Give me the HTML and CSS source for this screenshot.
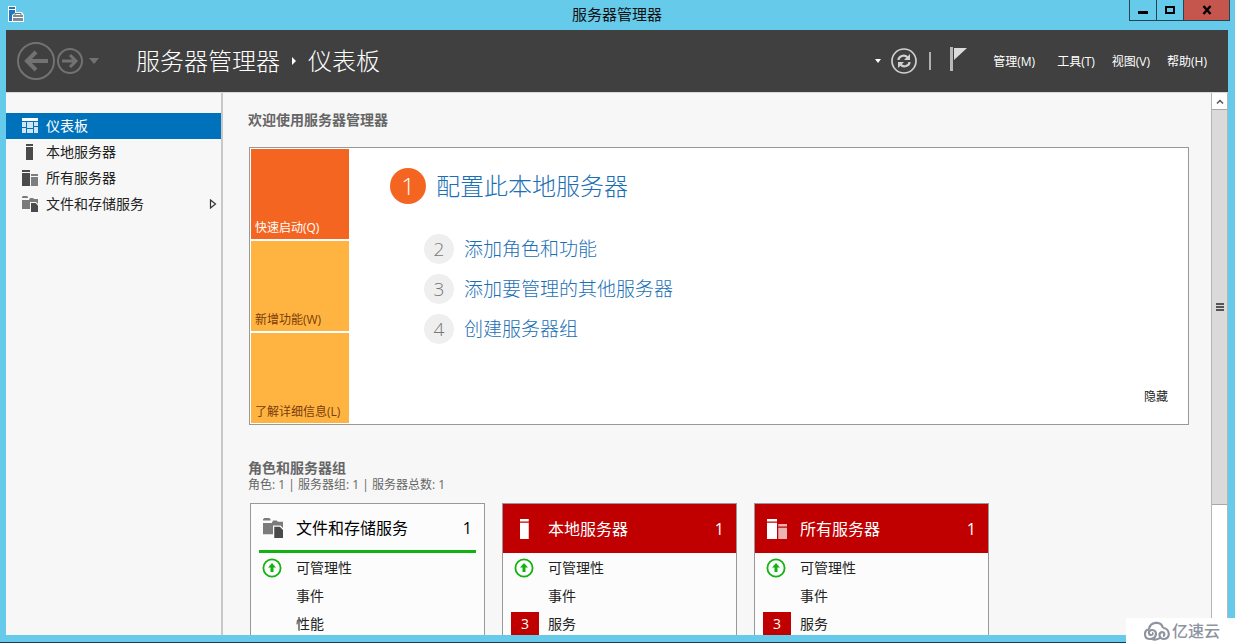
FILE: index.html
```html
<!DOCTYPE html>
<html lang="zh-CN">
<head>
<meta charset="utf-8">
<title>服务器管理器</title>
<link rel="stylesheet" href="styles.css">
</head>
<body>
<svg class="sprite" width="0" height="0" aria-hidden="true">
  <symbol id="i-server" viewBox="0 0 16 16"><path d="M4 0h7v2H4zM4 3h7v13H4z"/></symbol>
  <symbol id="i-servers" viewBox="0 0 16 16"><path d="M0 0h8v2H0zM0 3h8v13H0z"/><path opacity=".7" d="M9 4h7v2H9zM9 7h7v9H9z"/></symbol>
  <symbol id="i-files" viewBox="0 0 16 16"><path opacity=".72" d="M0 1l1-1h4l1 1v1H0zM0 4h7l1-2h3l1 1h4v5l-2-2H8v7H0z"/><path d="M9 7h4.500L16 9.500V16H9z"/></symbol>
  <symbol id="i-up" viewBox="0 0 20 20"><circle cx="10" cy="10" r="8.6" fill="none" stroke="#12b212" stroke-width="1.8"/><path fill="#12b212" d="M10 5l4 4.500h-2.500V14h-3V9.500H6z"/></symbol>
</svg>
<div class="window">
  <header class="titlebar">
    <svg class="app-icon" viewBox="0 0 16 16" aria-hidden="true">
      <path fill="#fff" d="M0 0h8v6h6l2 3v7H0z"/><path fill="#1f78bd" d="M1 1h6v2H1zM1 4h6v3L4 9v6H1z"/>
      <path fill="#7f8b95" d="M5 9h10v2H5zM5 12h10v3H5z"/><path fill="none" stroke="#66757f" d="M7 9V7.500h6V9"/>
    </svg>
    <h1 class="window-title">服务器管理器</h1>
    <div class="window-buttons">
      <button class="win-btn" aria-label="最小化"><svg width="10" height="10"><path d="M0 6h10v3H0z"/></svg></button>
      <button class="win-btn" aria-label="最大化"><svg width="10" height="10"><path fill="none" stroke="#000" stroke-width="2" d="M1 2h8v6H1z"/></svg></button>
      <button class="win-btn close" aria-label="关闭"><svg width="10" height="10"><path fill="none" stroke="#000" stroke-width="2.4" d="M1.500 1l7 8M8.500 1l-7 8"/></svg></button>
    </div>
  </header>

  <div class="toolbar">
    <div class="history">
      <button class="icon-btn" aria-label="后退"><svg width="38" height="38" fill="none" stroke="#727272"><circle cx="19" cy="19" r="18" stroke-width="2"/><path stroke-width="4" d="M31 19H10M19 10l-9 9 9 9"/></svg></button>
      <button class="icon-btn" aria-label="前进"><svg width="26" height="26" fill="none" stroke="#727272"><circle cx="13" cy="13" r="12" stroke-width="2"/><path stroke-width="3" d="M5 13h14M13 7l6 6-6 6"/></svg></button>
      <button class="icon-btn drop" aria-label="历史记录"><svg width="10" height="6"><path fill="#727272" d="M0 0h10L5 6z"/></svg></button>
    </div>
    <div class="crumbs">
      <span>服务器管理器</span>
      <svg width="6" height="8" aria-hidden="true"><path fill="#fff" d="M1 0l4 4-4 4z"/></svg>
      <span>仪表板</span>
    </div>
    <div class="actions">
      <button class="icon-btn" aria-label="选项"><svg width="8" height="5"><path fill="#fff" d="M1 0h6L4 4z"/></svg></button>
      <button class="icon-btn" aria-label="刷新"><svg width="26" height="26" fill="none" stroke="#d0d0d0"><circle cx="13" cy="13" r="12" stroke-width="1.700"/><path stroke-width="2.200" d="M7.500 12c0-4 6-6 9-2.500M18.500 14c0 4-6 6-9 2.500"/><path fill="#d0d0d0" stroke="none" d="M19 6v6h-6zM7 20v-6h6z"/></svg></button>
      <span class="divider"></span>
      <button class="icon-btn flag" aria-label="通知"><svg width="18" height="24"><path fill="#b8b8b8" d="M1 0h3v24H1z"/><path fill="#dcdcdc" d="M5 1h13L5 13z"/></svg></button>
    </div>
    <nav class="menu">
      <button>管理(M)</button><button>工具(T)</button><button>视图(V)</button><button>帮助(H)</button>
    </nav>
  </div>

  <div class="body">
    <nav class="sidebar">
      <a class="nav-item active" href="#"><svg viewBox="0 0 16 16"><path fill="#fff" d="M0 0h16v3H0z"/><path fill="#cfe5f5" d="M0 4h4v5H0zM0 10h4v5H0zM5 4h6v6H5zM5 11h6v4H5zM12 4h4v4h-4zM12 9h4v6h-4z"/></svg><span>仪表板</span></a>
      <a class="nav-item" href="#"><svg><use href="#i-server"/></svg><span>本地服务器</span></a>
      <a class="nav-item" href="#"><svg><use href="#i-servers"/></svg><span>所有服务器</span></a>
      <a class="nav-item" href="#"><svg><use href="#i-files"/></svg><span>文件和存储服务</span><svg class="expand" viewBox="0 0 8 10"><path fill="none" stroke="#333" stroke-width="1.200" d="M1.500 1l5 4-5 4z"/></svg></a>
    </nav>

    <main class="content">
      <h2 class="section-title">欢迎使用服务器管理器</h2>
      <section class="welcome">
        <div class="tabs">
          <button class="tab current">快速启动(Q)</button>
          <button class="tab">新增功能(W)</button>
          <button class="tab">了解详细信息(L)</button>
        </div>
        <div class="steps">
          <a class="step first" href="#"><span class="num">1</span><span>配置此本地服务器</span></a>
          <a class="step" href="#"><span class="num">2</span><span>添加角色和功能</span></a>
          <a class="step" href="#"><span class="num">3</span><span>添加要管理的其他服务器</span></a>
          <a class="step" href="#"><span class="num">4</span><span>创建服务器组</span></a>
        </div>
        <button class="hide">隐藏</button>
      </section>

      <h2 class="section-title groups">角色和服务器组</h2>
      <p class="summary">角色: 1 | 服务器组: 1 | 服务器总数: 1</p>
      <div class="tiles">
        <article class="tile">
          <h3 class="tile-head ok"><svg><use href="#i-files"/></svg><span>文件和存储服务</span><span class="count">1</span></h3>
          <ul>
            <li><svg><use href="#i-up"/></svg><span>可管理性</span></li>
            <li><i></i><span>事件</span></li>
            <li><i></i><span>性能</span></li>
          </ul>
        </article>
        <article class="tile">
          <h3 class="tile-head alert"><svg><use href="#i-server"/></svg><span>本地服务器</span><span class="count">1</span></h3>
          <ul>
            <li><svg><use href="#i-up"/></svg><span>可管理性</span></li>
            <li><i></i><span>事件</span></li>
            <li><b>3</b><span>服务</span></li>
          </ul>
        </article>
        <article class="tile">
          <h3 class="tile-head alert"><svg><use href="#i-servers"/></svg><span>所有服务器</span><span class="count">1</span></h3>
          <ul>
            <li><svg><use href="#i-up"/></svg><span>可管理性</span></li>
            <li><i></i><span>事件</span></li>
            <li><b>3</b><span>服务</span></li>
          </ul>
        </article>
      </div>
    </main>

    <div class="scrollbar">
      <button class="scroll-up" aria-label="向上滚动"><svg width="8" height="5"><path fill="none" stroke="#555" stroke-width="1.500" d="M1 4.500l3-3 3 3"/></svg></button>
      <div class="thumb"><svg width="8" height="8"><path fill="#555" d="M0 0h8v2H0zM0 3h8v2H0zM0 6h8v2H0z"/></svg></div>
    </div>
  </div>
</div>
<div class="watermark">
  <svg viewBox="0 0 26 20" fill="none" stroke="#8d939f" stroke-width="2.200" aria-hidden="true"><path d="M5 8C6 1 17-1 19 7M19 7c7 0 8 11 1 11-5 0-6-6-2-7 3 0 3 4 1 4M17 16c-3 3-7 3-9 2M5 8c-6 2-5 10 1 10 7 0 8-9 2-9-4 0-4 5-1 5 2 0 2-2 1-2"/></svg>
  <span>亿速云</span>
</div>
</body>
</html>
```
FILE: styles.css
```css
* { box-sizing: border-box; }

body {
  margin: 0;
  font: 14px/20px "Open Sans", "Noto Sans CJK SC", sans-serif;
  color: #222;
}

button { font: inherit; color: inherit; background: none; border: 0; padding: 0; }
a { color: inherit; text-decoration: none; }
h1, h2, h3, p, ul { margin: 0; padding: 0; list-style: none; }
svg { display: block; flex: none; }
.sprite { position: absolute; }

.window {
  height: 100vh;
  display: flex;
  flex-direction: column;
  padding: 0 7px 7px 6px;
  background: #66cbea;
  border-bottom: 1px solid #1d3a4c;
}

/* Title bar */
.titlebar {
  flex: none;
  height: 30px;
  display: grid;
  grid-template-columns: 1fr auto 1fr;
  align-items: start;
}
.app-icon { width: 16px; height: 16px; margin: 6px 0 0 2px; }
.window-title { font-size: 15px; font-weight: 400; line-height: 28px; color: #111; }
.window-buttons { justify-self: end; display: flex; margin-right: -2px; border: 1px solid #27454f; border-top: 0; }
.win-btn { width: 27px; height: 20px; display: grid; place-items: center; border-right: 1px solid #27454f; }
.win-btn.close { width: 45px; background: #c5564e; border-right: 0; }

/* Toolbar */
.toolbar {
  flex: none;
  height: 62px;
  display: flex;
  align-items: center;
  padding: 0 21px 0 11px;
  background: #404040;
  color: #fff;
}
.history { display: flex; align-items: center; gap: 2px; }
.drop { margin-left: 4px; }
.crumbs {
  display: flex;
  align-items: center;
  gap: 11px;
  margin-left: 37px;
  font-size: 24px;
  font-weight: 300;
  line-height: 36px;
}
.actions { display: flex; align-items: center; gap: 9px; margin-left: auto; }
.divider { width: 2px; height: 18px; margin: 0 9px 0 3px; background: #b0b0b0; }
.flag { margin-bottom: 4px; }
.menu { display: flex; gap: 17px; margin-left: 26px; padding-top: 2px; font-size: 12px; }
.menu button:first-child { margin-right: 5px; }

/* Body */
.body { flex: 1; min-height: 0; display: flex; background: #f7f7f7; border-top: 1px solid #d8d8d8; }
.sidebar { flex: none; width: 217px; padding-top: 20px; border-right: 2px solid #c8c8c8; }
.nav-item { height: 26px; display: flex; align-items: center; gap: 8px; padding: 0 4px 0 16px; fill: #4a4a4a; }
.nav-item svg { width: 16px; height: 16px; }
.nav-item.active { background: #0072bc; color: #fff; }
.nav-item .expand { width: 8px; height: 10px; margin-left: auto; }

.content { flex: 1; min-width: 0; overflow: hidden; padding: 17px 22px 0 26px; }
.section-title { margin-left: -1px; font-size: 14px; font-weight: 700; color: #666; }
.welcome { display: flex; margin-top: 17px; padding: 1px; border: 1px solid #999; background: #fff; }
.tabs { flex: none; display: grid; gap: 2px; }
.tab {
  width: 98px;
  height: 90px;
  display: flex;
  align-items: flex-end;
  padding: 0 0 1px 4px;
  background: #ffb441;
  color: #7a3c0c;
  font-size: 12px;
  white-space: nowrap;
}
.tab.current { background: #f46522; color: #fff; }
.steps { flex: 1; display: flex; flex-direction: column; align-items: flex-start; gap: 10px; padding: 19px 0 0 41px; }
.step { display: flex; align-items: center; gap: 10px; margin-left: 34px; font-size: 19px; font-weight: 300; line-height: 30px; color: #1a6fb5; }
.num { width: 30px; height: 30px; border-radius: 50%; background: #efefef; color: #777; text-align: center; }
.step.first { margin: 0 0 20px; font-size: 24px; line-height: 36px; }
.first .num { width: 36px; height: 36px; background: #f46522; color: #fff; }
.hide { align-self: flex-end; margin: 0 19px 16px 0; font-size: 12px; }

.groups { margin-top: 33px; }
.summary { margin-left: -1px; font-size: 12px; line-height: 14px; color: #666; }
.tiles { display: flex; gap: 17px; margin: 11px 0 0 1px; }
.tile { width: 235px; height: 240px; flex: none; border: 1px solid #999; background: #fcfcfc; }
.tile-head {
  height: 49px;
  display: flex;
  align-items: center;
  margin: 0 8px;
  padding: 0 4px;
  font-size: 16px;
  font-weight: 400;
  color: #000;
}
.tile-head svg { width: 20px; height: 20px; margin-right: 13px; fill: #4a4a4a; }
.tile-head .count { margin-left: auto; }
.tile-head.ok { padding-top: 2px; border-bottom: 3px solid #12b212; }
.tile-head.alert { margin: 0; padding: 0 12px; background: #c00000; color: #fff; }
.tile-head.alert svg { fill: #fff; }
.tile ul { padding-top: 1px; }
.tile li { height: 28px; display: flex; align-items: center; gap: 9px; padding-left: 8px; }
.tile li svg { width: 20px; height: 20px; margin: 0 5px 0 3px; }
.tile i, .tile b { width: 28px; line-height: 24px; text-align: center; }
.tile b { background: #c00000; color: #fff; font-weight: 400; }

/* Scrollbar */
.scrollbar { flex: none; width: 17px; background: #fff; border: 1px solid #b5b5b5; border-width: 0 1px; }
.scroll-up { width: 15px; height: 16px; display: grid; place-items: center; }
.thumb { height: 73%; display: grid; place-items: center; background: #dadada; border: 1px solid #a8a8a8; border-width: 1px 0; }

.watermark {
  position: absolute;
  right: 0;
  bottom: 0;
  width: 109px;
  height: 25px;
  display: flex;
  align-items: center;
  gap: 2px;
  padding-left: 18px;
  background: #fff;
  color: #8d939f;
  font-size: 16px;
  font-weight: 500;
}
.watermark svg { width: 26px; height: 20px; }
```
